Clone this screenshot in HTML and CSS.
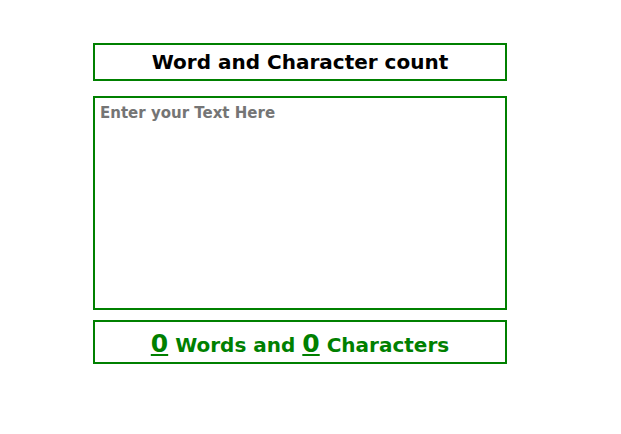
FILE: index.html
```html
<!DOCTYPE html>
<html>
<head>
<meta charset="utf-8">
<link rel="stylesheet" href="styles.css">
</head>
<body>
<div class="wrap">
  <div class="title">Word and Character count</div>
  <textarea class="input" placeholder="Enter your Text Here"></textarea>
  <div class="result"><span class="num">0</span> Words and <span class="num">0</span> Characters</div>
</div>
</body>
</html>
```
FILE: styles.css
```css
html, body { margin: 0; padding: 0; background: #fff; }
body { font-family: "DejaVu Sans", Verdana, sans-serif; }
.wrap {
  width: 414px;
  margin-left: 93px;
  padding-top: 43px;
  display: flex;
  flex-direction: column;
}
.title {
  box-sizing: border-box;
  height: 38px;
  border: 2px solid #008000;
  font-weight: bold;
  font-size: 20px;
  color: #000;
  text-align: center;
  line-height: 35px;
}
.input {
  box-sizing: border-box;
  margin-top: 15px;
  height: 214px;
  width: 414px;
  border: 2px solid #008000;
  outline: none;
  resize: none;
  padding: 6px 5px 5px;
  font-family: "DejaVu Sans", Verdana, sans-serif;
  font-weight: bold;
  font-size: 15px;
}
.input::placeholder { color: #757575; }
.result {
  box-sizing: border-box;
  margin-top: 10px;
  height: 44px;
  border: 2px solid #008000;
  color: #008000;
  font-weight: bold;
  font-size: 20px;
  text-align: center;
  line-height: 40px;
  padding-top: 2px;
}
.num { font-size: 25px; text-decoration: underline; }
```
